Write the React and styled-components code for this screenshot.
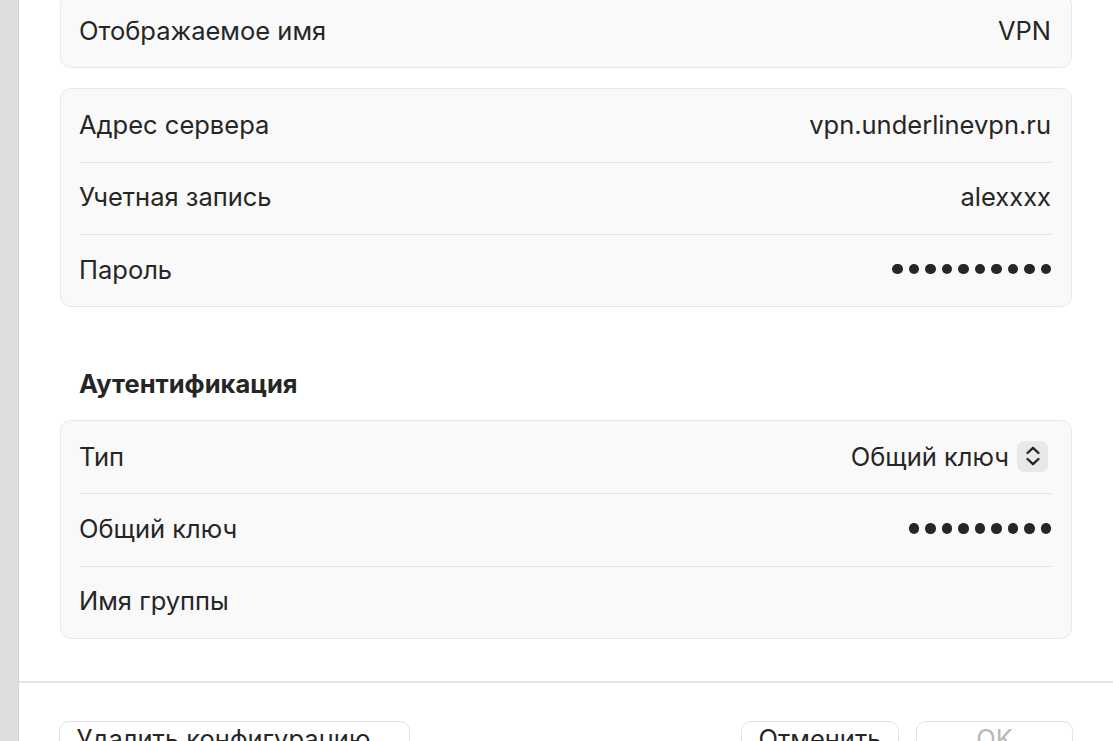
import React from 'react';
import styled, { createGlobalStyle } from 'styled-components';

const GlobalStyle = createGlobalStyle`
  html, body {
    margin: 0;
    padding: 0;
    background: #ffffff;
    overflow: hidden;
  }
  * { box-sizing: border-box; }
`;

const Window = styled.div`
  display: flex;
  width: 1113px;
  height: 741px;
  font-family: Inter, 'Noto Sans', sans-serif;
  color: #262626;
  overflow: hidden;
`;

const SideStrip = styled.div`
  width: 19px;
  flex-shrink: 0;
  background: #dedede;
  border-right: 1px solid #d6d6d6;
`;

const Sheet = styled.main`
  flex: 1;
  display: flex;
  flex-direction: column;
  background: #ffffff;
`;

const Content = styled.div`
  display: flex;
  flex-direction: column;
  padding: 0 41px;
  margin-top: -6px;
`;

const Card = styled.section`
  background: #f9f9f9;
  border: 1px solid #e8e8e8;
  border-radius: 11px;
  margin-bottom: ${p => p.$gap || 0}px;
`;

const Row = styled.div`
  display: flex;
  align-items: center;
  justify-content: space-between;
  height: 72.3px;
  padding: 0 ${p => p.$right || 20}px 2px 18px;
  font-size: 25.5px;

  & + & {
    background-image: linear-gradient(#e6e6e6, #e6e6e6);
    background-size: calc(100% - 38px) 1px;
    background-position: 19px 0;
    background-repeat: no-repeat;
  }
`;

const Value = styled.span`
  display: flex;
  align-items: center;
  gap: 8px;
`;

const Dots = styled.span`
  display: flex;
  gap: 6px;
`;

const Dot = styled.i`
  width: 10.5px;
  height: 10.5px;
  border-radius: 50%;
  background: #262626;
`;

const Stepper = styled.span`
  width: 31px;
  height: 31px;
  border-radius: 7px;
  background: #e8e8e8;
  display: flex;
  align-items: center;
  justify-content: center;
`;

const SectionTitle = styled.h2`
  margin: 62px 0 21px;
  padding-left: 19px;
  height: 30px;
  line-height: 30px;
  font-size: 25.5px;
  font-weight: 700;
`;

const Divider = styled.hr`
  margin: 42px 0 0;
  border: none;
  border-top: 2px solid #e4e4e4;
`;

const Footer = styled.div`
  display: flex;
  align-items: flex-start;
  padding: 38px 40px 0 40px;
  gap: 17px;
`;

const Button = styled.button`
  height: 46px;
  width: ${p => p.$w}px;
  padding: 2px 0 0;
  background: #ffffff;
  border: 1px solid #e2e2e2;
  border-radius: 10px;
  box-shadow: 0 1px 1px rgba(0, 0, 0, 0.04);
  font-family: Inter, 'Noto Sans', sans-serif;
  font-size: 25.5px;
  color: ${p => (p.disabled ? '#b8b8b8' : '#262626')};
  text-align: center;
  line-height: 30px;
  display: flex;
  align-items: flex-start;
  justify-content: center;
`;

const Spacer = styled.div`
  flex: 1;
`;

const Secret = ({ count }) => (
  <Dots>
    {Array.from({ length: count }).map((_, i) => (
      <Dot key={i} />
    ))}
  </Dots>
);

const ChevronStepper = () => (
  <Stepper>
    <svg width="16" height="22" viewBox="0 0 16 22" fill="none">
      <path d="M2.5 8 L8 2.8 L13.5 8" stroke="#262626" strokeWidth="2.4" strokeLinecap="round" strokeLinejoin="round" />
      <path d="M2.5 14 L8 19.2 L13.5 14" stroke="#262626" strokeWidth="2.4" strokeLinecap="round" strokeLinejoin="round" />
    </svg>
  </Stepper>
);

export default function App() {
  return (
    <>
      <GlobalStyle />
      <Window>
        <SideStrip />
        <Sheet>
          <Content>
            <Card $gap={20}>
              <Row>
                <span>Отображаемое имя</span>
                <Value>VPN</Value>
              </Row>
            </Card>

            <Card>
              <Row>
                <span>Адрес сервера</span>
                <Value>vpn.underlinevpn.ru</Value>
              </Row>
              <Row>
                <span>Учетная запись</span>
                <Value>alexxxx</Value>
              </Row>
              <Row>
                <span>Пароль</span>
                <Secret count={10} />
              </Row>
            </Card>

            <SectionTitle>Аутентификация</SectionTitle>

            <Card>
              <Row $right={23}>
                <span>Тип</span>
                <Value>
                  Общий ключ
                  <ChevronStepper />
                </Value>
              </Row>
              <Row>
                <span>Общий ключ</span>
                <Secret count={9} />
              </Row>
              <Row>
                <span>Имя группы</span>
                <span />
              </Row>
            </Card>
          </Content>

          <Divider />

          <Footer>
            <Button $w={351}>Удалить конфигурацию…</Button>
            <Spacer />
            <Button $w={158}>Отменить</Button>
            <Button $w={157} disabled>OK</Button>
          </Footer>
        </Sheet>
      </Window>
    </>
  );
}
